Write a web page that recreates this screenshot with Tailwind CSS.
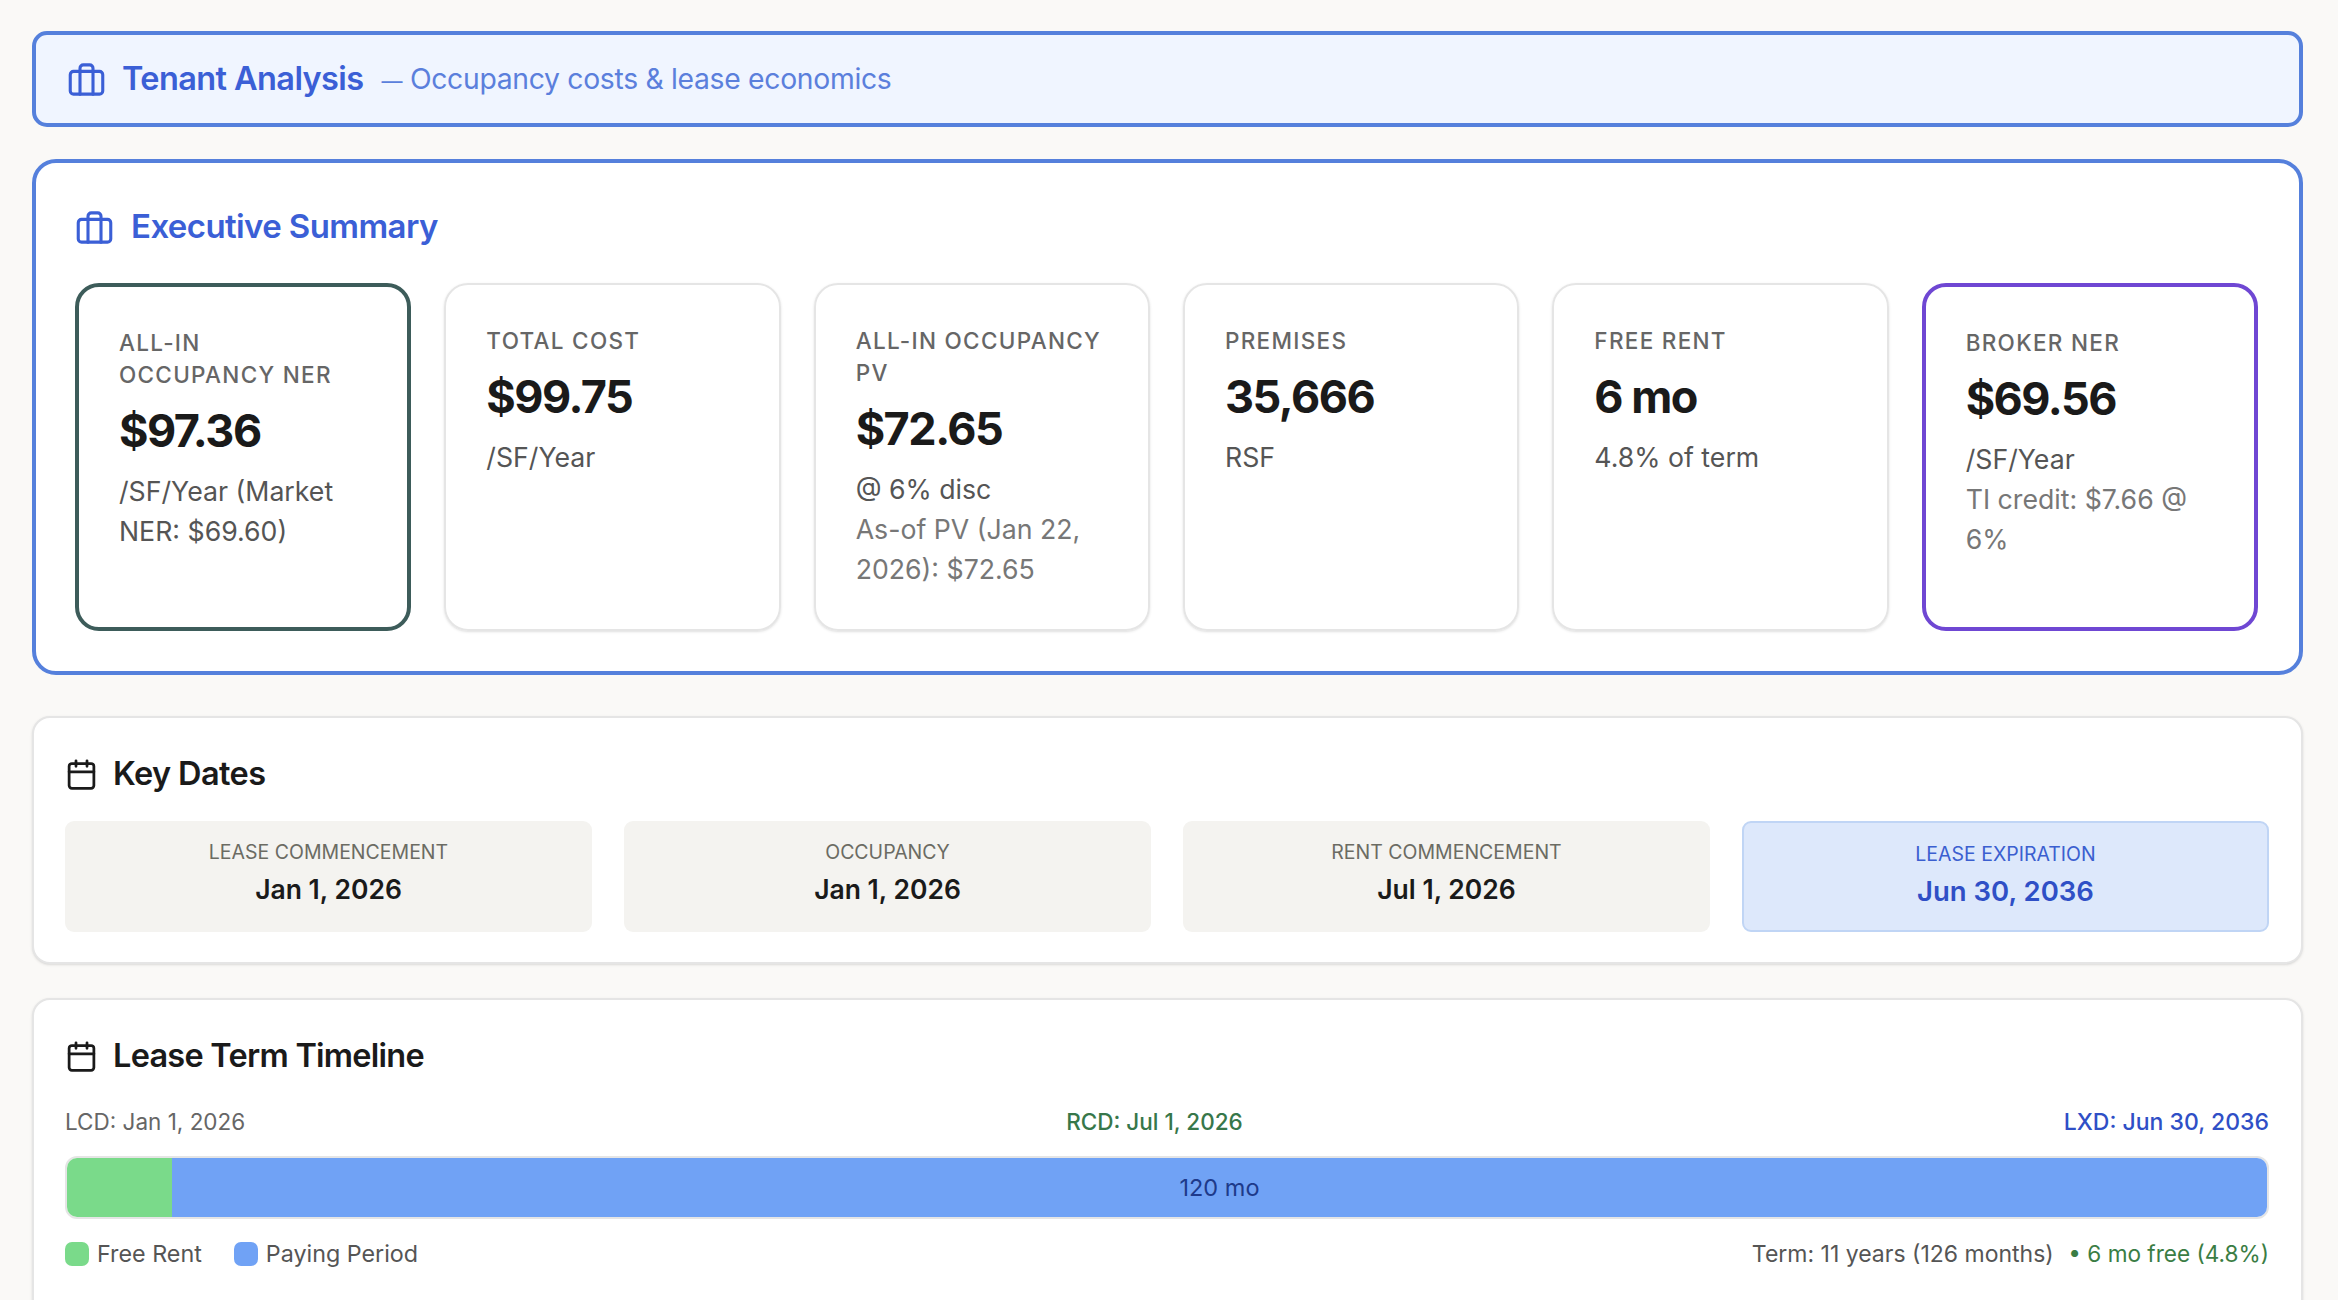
<!DOCTYPE html>
<html lang="en">
<head>
    <meta charset="UTF-8">
    <title>Tenant Analysis</title>
    <script src="https://cdn.jsdelivr.net/npm/@tailwindcss/browser@4"></script>
</head>
<body class="bg-[#faf9f7] font-['Inter',sans-serif] text-[#1a1a1a] h-[1300px] overflow-hidden">
    <div class="pl-[32px] pr-[35px] pt-[31px] flex flex-col">
        <!-- page banner -->
        <div class="h-[96px] bg-[#f0f5ff] border-4 border-[#5580dc] rounded-[15px] pl-[31px] flex items-center gap-[16px]">
            <svg class="w-[39px] h-[39px] text-[#3b5fd6]" fill="none" viewBox="0 0 24 24" stroke="currentColor" stroke-width="1.9" stroke-linecap="round" stroke-linejoin="round">
                <rect x="2" y="7" width="20" height="14" rx="2"/>
                <path d="M16 21V5a2 2 0 0 0-2-2h-4a2 2 0 0 0-2 2v16"/>
            </svg>
            <span class="text-[32.5px] font-semibold text-[#3b5fd6] tracking-[-0.6px]">Tenant Analysis</span>
            <span class="text-[28.3px] text-[#5b7fdc] ml-[2px] tracking-[-0.3px]"><span class="text-[21px]">—</span> Occupancy costs &amp; lease economics</span>
        </div>

        <!-- executive summary -->
        <div class="mt-[32px] h-[516px] bg-white border-4 border-[#5580dc] rounded-[24px] pl-[39px] pr-[41px] pt-[42px]">
            <div class="h-[44px] flex items-center gap-[17px]">
                <svg class="w-[39px] h-[39px] text-[#3b5fd6]" fill="none" viewBox="0 0 24 24" stroke="currentColor" stroke-width="1.9" stroke-linecap="round" stroke-linejoin="round">
                    <rect x="2" y="7" width="20" height="14" rx="2"/>
                    <path d="M16 21V5a2 2 0 0 0-2-2h-4a2 2 0 0 0-2 2v16"/>
                </svg>
                <span class="text-[33px] font-semibold text-[#3b5fd6] tracking-[-0.6px]">Executive Summary</span>
            </div>
            <div class="mt-[34px] grid grid-cols-6 gap-[33px] h-[348px]">
                <div class="rounded-[24px] border-4 border-[#3d5c5a] px-[40px] pt-[40px]">
                    <div class="text-[22.5px] leading-[32px] tracking-[1.3px] font-medium uppercase text-[#666]">All-in<br>Occupancy NER</div>
                    <div class="mt-[8px] text-[45px] leading-[64px] font-bold tracking-[-1.5px]">$97.36</div>
                    <div class="mt-[8px] text-[26.7px] leading-[40px] text-[#555]">/SF/Year (Market NER: $69.60)</div>
                </div>
                <div class="rounded-[24px] border-2 border-[#e5e5e5] shadow-sm px-[40px] pt-[39.5px]">
                    <div class="text-[22.5px] leading-[32px] tracking-[1.3px] font-medium uppercase text-[#666]">Total Cost</div>
                    <div class="mt-[8px] text-[45px] leading-[64px] font-bold tracking-[-1.5px]">$99.75</div>
                    <div class="mt-[8px] text-[26.7px] leading-[40px] text-[#555]">/SF/Year</div>
                </div>
                <div class="rounded-[24px] border-2 border-[#e5e5e5] shadow-sm px-[40px] pt-[39.5px]">
                    <div class="text-[22.5px] leading-[32px] tracking-[1.3px] font-medium uppercase text-[#666] -mr-[10px]">All-in Occupancy<br>PV</div>
                    <div class="mt-[8px] text-[45px] leading-[64px] font-bold tracking-[-1.5px]">$72.65</div>
                    <div class="mt-[8px] text-[26.7px] leading-[40px] text-[#555]">@ 6% disc</div>
                    <div class="text-[26.7px] leading-[40px] text-[#777]">As-of PV (Jan 22, 2026): $72.65</div>
                </div>
                <div class="rounded-[24px] border-2 border-[#e5e5e5] shadow-sm px-[40px] pt-[39.5px]">
                    <div class="text-[22.5px] leading-[32px] tracking-[1.3px] font-medium uppercase text-[#666]">Premises</div>
                    <div class="mt-[8px] text-[45px] leading-[64px] font-bold tracking-[-1.5px]">35,666</div>
                    <div class="mt-[8px] text-[26.7px] leading-[40px] text-[#555]">RSF</div>
                </div>
                <div class="rounded-[24px] border-2 border-[#e5e5e5] shadow-sm px-[40px] pt-[39.5px]">
                    <div class="text-[22.5px] leading-[32px] tracking-[1.3px] font-medium uppercase text-[#666]">Free Rent</div>
                    <div class="mt-[8px] text-[45px] leading-[64px] font-bold tracking-[-1.5px]">6 mo</div>
                    <div class="mt-[8px] text-[26.7px] leading-[40px] text-[#555]">4.8% of term</div>
                </div>
                <div class="rounded-[24px] border-4 border-[#6f47d3] px-[40px] pt-[40px]">
                    <div class="text-[22.5px] leading-[32px] tracking-[1.3px] font-medium uppercase text-[#666]">Broker NER</div>
                    <div class="mt-[8px] text-[45px] leading-[64px] font-bold tracking-[-1.5px]">$69.56</div>
                    <div class="mt-[8px] text-[26.7px] leading-[40px] text-[#555]">/SF/Year</div>
                    <div class="text-[26.7px] leading-[40px] text-[#777]">TI credit: $7.66 @ 6%</div>
                </div>
            </div>
        </div>

        <!-- key dates -->
        <div class="mt-[41px] h-[248px] bg-white border-2 border-[#e5e5e5] rounded-[18px] shadow-sm pl-[31px] pr-[32px] pt-[34px]">
            <div class="h-[44px] flex items-center gap-[15px]">
                <svg class="w-[33px] h-[33px]" fill="none" viewBox="0 0 24 24" stroke="currentColor" stroke-width="2" stroke-linecap="round" stroke-linejoin="round">
                    <path d="M8 2v4M16 2v4"/>
                    <rect x="3" y="4" width="18" height="18" rx="2"/>
                    <path d="M3 10h18"/>
                </svg>
                <span class="text-[32.5px] font-semibold tracking-[-0.6px]">Key Dates</span>
            </div>
            <div class="mt-[25px] grid grid-cols-4 gap-[32px] h-[111px]">
                <div class="rounded-[9px] bg-[#f4f3f0] flex flex-col items-center pt-[16px]">
                    <div class="text-[19.5px] leading-[30px] uppercase text-[#6b6b63]">Lease Commencement</div>
                    <div class="mt-[2px] text-[26.5px] leading-[40px] font-semibold">Jan 1, 2026</div>
                </div>
                <div class="rounded-[9px] bg-[#f4f3f0] flex flex-col items-center pt-[16px]">
                    <div class="text-[19.5px] leading-[30px] uppercase text-[#6b6b63]">Occupancy</div>
                    <div class="mt-[2px] text-[26.5px] leading-[40px] font-semibold">Jan 1, 2026</div>
                </div>
                <div class="rounded-[9px] bg-[#f4f3f0] flex flex-col items-center pt-[16px]">
                    <div class="text-[19.5px] leading-[30px] uppercase text-[#6b6b63]">Rent Commencement</div>
                    <div class="mt-[2px] text-[26.5px] leading-[40px] font-semibold">Jul 1, 2026</div>
                </div>
                <div class="rounded-[9px] bg-[#dde8fb] border-2 border-[#c0d5f5] flex flex-col items-center pt-[16px]">
                    <div class="text-[19.5px] leading-[30px] uppercase text-[#3b5fd0]">Lease Expiration</div>
                    <div class="mt-[2px] text-[27.5px] leading-[40px] font-semibold text-[#2f4fc6]">Jun 30, 2036</div>
                </div>
            </div>
        </div>

        <!-- timeline -->
        <div class="mt-[34px] h-[320px] bg-white border-2 border-[#e5e5e5] rounded-[18px] shadow-sm pl-[31px] pr-[32px] pt-[34px]">
            <div class="h-[44px] flex items-center gap-[15px]">
                <svg class="w-[33px] h-[33px]" fill="none" viewBox="0 0 24 24" stroke="currentColor" stroke-width="2" stroke-linecap="round" stroke-linejoin="round">
                    <path d="M8 2v4M16 2v4"/>
                    <rect x="3" y="4" width="18" height="18" rx="2"/>
                    <path d="M3 10h18"/>
                </svg>
                <span class="text-[32.5px] font-semibold tracking-[-0.75px]">Lease Term Timeline</span>
            </div>
            <div class="mt-[26px] flex justify-between text-[22.5px] leading-[36px]">
                <span class="text-[#666]">LCD: Jan 1, 2026</span>
                <span class="font-medium text-[#37774a]">RCD: Jul 1, 2026</span>
                <span class="font-medium text-[#2f4fc6] text-[23px]">LXD: Jun 30, 2036</span>
            </div>
            <div class="mt-[16px] h-[63px] rounded-[12px] border-2 border-[#e5e5e5] flex overflow-hidden">
                <div class="w-[105px] bg-[#7ada8a]"></div>
                <div class="flex-1 bg-[#70a2f5] flex items-center justify-center text-[23.5px] text-[#1e3a8a]">120 mo</div>
            </div>
            <div class="mt-[17px] flex justify-between items-center text-[23.3px] leading-[36px]">
                <div class="flex items-center gap-[32px] text-[#555]">
                    <span class="flex items-center gap-[8px]"><i class="w-[24px] h-[24px] rounded-[7px] bg-[#7ada8a]"></i>Free Rent</span>
                    <span class="flex items-center gap-[8px]"><i class="w-[24px] h-[24px] rounded-[7px] bg-[#70a2f5]"></i>Paying Period</span>
                </div>
                <div class="text-[23px]">
                    <span class="text-[#555]">Term: 11 years (126 months)</span>
                    <span class="ml-[8px] text-[#3a7d44] text-[22.6px]">• 6 mo free (4.8%)</span>
                </div>
            </div>
        </div>
    </div>
</body>
</html>
